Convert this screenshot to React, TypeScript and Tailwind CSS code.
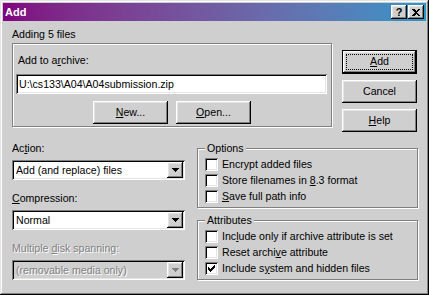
import React from "react";

const face = "bg-[#cfcfcf]";
const raised =
  "shadow-[inset_-1px_-1px_#000,inset_1px_1px_#fff,inset_-2px_-2px_#808080,inset_2px_2px_#e4e4e4]";
const sunken =
  "shadow-[inset_1px_1px_#808080,inset_-1px_-1px_#fff,inset_2px_2px_#000,inset_-2px_-2px_#e4e4e4]";
const etched = "border border-[#808080] shadow-[inset_1px_1px_#fff,1px_1px_#fff]";
const dim = "text-[#808080] [text-shadow:1px_1px_0_#fff]";

const Arrow = ({ color = "#000" }: { color?: string }) => (
  <svg width="7" height="4" viewBox="0 0 7 4" shapeRendering="crispEdges">
    <rect x="0" y="0" width="7" height="1" fill={color} />
    <rect x="1" y="1" width="5" height="1" fill={color} />
    <rect x="2" y="2" width="3" height="1" fill={color} />
    <rect x="3" y="3" width="1" height="1" fill={color} />
  </svg>
);

const Tick = () => (
  <svg width="7" height="7" viewBox="0 0 7 7" shapeRendering="crispEdges">
    <rect x="6" y="0" width="1" height="1" />
    <rect x="5" y="1" width="2" height="1" />
    <rect x="0" y="2" width="1" height="1" />
    <rect x="4" y="2" width="3" height="1" />
    <rect x="0" y="3" width="2" height="1" />
    <rect x="3" y="3" width="3" height="1" />
    <rect x="0" y="4" width="5" height="1" />
    <rect x="1" y="5" width="3" height="1" />
    <rect x="2" y="6" width="1" height="1" />
  </svg>
);

const Check = ({ checked, label }: { checked?: boolean; label: React.ReactNode }) => (
  <div className="flex items-center gap-[4px] h-[13px]">
    <span className={`w-[13px] h-[13px] bg-white shrink-0 flex items-center justify-center ${sunken}`}>
      {checked && <Tick />}
    </span>
    <span className="leading-[13px] whitespace-nowrap">{label}</span>
  </div>
);

const Combo = ({ value, disabled }: { value: string; disabled?: boolean }) => (
  <div className={`h-[20px] p-[2px] flex ${disabled ? face : "bg-white"} ${sunken}`}>
    <span className={`flex-1 pl-[2px] leading-[16px] whitespace-nowrap ${disabled ? dim : ""}`}>{value}</span>
    <span className={`w-[16px] h-[16px] flex items-center justify-center ${face} ${raised}`}>
      <Arrow color={disabled ? "#808080" : "#000"} />
    </span>
  </div>
);

const Btn = ({ children }: { children: React.ReactNode }) => (
  <div className={`w-[75px] h-[23px] flex items-center justify-center ${face} ${raised}`}>{children}</div>
);

const Group = ({ title, children }: { title: string; children: React.ReactNode }) => (
  <div className={`relative h-[60px] pt-[9px] pl-[7px] flex flex-col gap-[3px] ${etched}`}>
    <span className={`absolute -top-[7px] left-[7px] px-[2px] leading-[13px] ${face}`}>{title}</span>
    {children}
  </div>
);

export default function App() {
  return (
    <div
      className={`w-[429px] h-[295px] p-[3px] flex flex-col text-[10.6px] text-black font-['Liberation_Sans',_Arial,_sans-serif] ${face} shadow-[inset_-1px_-1px_#000,inset_1px_1px_#e4e4e4,inset_-2px_-2px_#808080,inset_2px_2px_#fff]`}
    >
      {/* title bar */}
      <div className="h-[18px] flex items-center justify-between pl-[2px] pr-[2px] bg-linear-to-r from-[#800080] to-[#2b95c8]">
        <span className="text-white font-bold text-[11px] leading-[18px]">Add</span>
        <div className="flex gap-[1px]">
          <div className={`w-[16px] h-[14px] flex items-center justify-center font-bold text-[11px] leading-[14px] ${face} ${raised}`}>
            ?
          </div>
          <div className={`w-[16px] h-[14px] flex items-center justify-center ${face} ${raised}`}>
            <svg width="8" height="7" viewBox="0 0 8 7" shapeRendering="crispEdges">
              <path d="M0 0h2l2 2 2-2h2v1L5 3.5 8 6v1H6L4 5 2 7H0V6l3-2.5L0 1z" fill="#000" />
            </svg>
          </div>
        </div>
      </div>

      <div className="pl-[9px] flex flex-col">
        <p className="mt-[7px] leading-[13px]">Adding 5 files</p>

        <div className="mt-[2px] flex gap-[10px]">
          <div className={`w-[320px] h-[84px] pt-[10px] flex flex-col ${etched}`}>
            <span className="pl-[5px] leading-[13px]">
              Add to a<u>r</u>chive:
            </span>
            <div className={`mt-[7px] ml-[3px] w-[311px] h-[20px] bg-white pl-[3px] leading-[20px] ${sunken}`}>
              U:\cs133\A04\A04submission.zip
            </div>
            <div className="mt-[7px] flex justify-center gap-[8px]">
              <Btn>
                <u>N</u>ew...
              </Btn>
              <Btn>
                <u>O</u>pen...
              </Btn>
            </div>
          </div>

          <div className="mt-[7px] flex flex-col gap-[6px]">
            <div className="w-[75px] h-[24px] border border-black">
              <div className={`w-full h-full p-[3px] ${face} ${raised}`}>
                <div className="w-full h-full border border-dotted border-black flex items-center justify-center">
                  <span>
                    <u>A</u>dd
                  </span>
                </div>
              </div>
            </div>
            <Btn>Cancel</Btn>
            <Btn>
              <u>H</u>elp
            </Btn>
          </div>
        </div>

        <div className="mt-[10px] flex gap-[12px]">
          <div className="w-[173px] flex flex-col">
            <span className="leading-[13px]">
              Ac<u>t</u>ion:
            </span>
            <div className="mt-[5px]">
              <Combo value="Add (and replace) files" />
            </div>
            <span className="mt-[12px] leading-[13px]">
              <u>C</u>ompression:
            </span>
            <div className="mt-[5px]">
              <Combo value="Normal" />
            </div>
            <span className={`mt-[12px] leading-[13px] ${dim}`}>
              Multiple <u>d</u>isk spanning:
            </span>
            <div className="mt-[5px]">
              <Combo value="(removable media only)" disabled />
            </div>
          </div>

          <div className="w-[221px] mt-[6px] flex flex-col gap-[12px]">
            <Group title="Options">
              <Check label="Encrypt added files" />
              <Check
                label={
                  <>
                    Store filenames in <u>8</u>.3 format
                  </>
                }
              />
              <Check
                label={
                  <>
                    <u>S</u>ave full path info
                  </>
                }
              />
            </Group>
            <Group title="Attributes">
              <Check
                label={
                  <>
                    Inc<u>l</u>ude only if archive attribute is set
                  </>
                }
              />
              <Check
                label={
                  <>
                    Reset archi<u>v</u>e attribute
                  </>
                }
              />
              <Check
                checked
                label={
                  <>
                    Include s<u>y</u>stem and hidden files
                  </>
                }
              />
            </Group>
          </div>
        </div>
      </div>
    </div>
  );
}
